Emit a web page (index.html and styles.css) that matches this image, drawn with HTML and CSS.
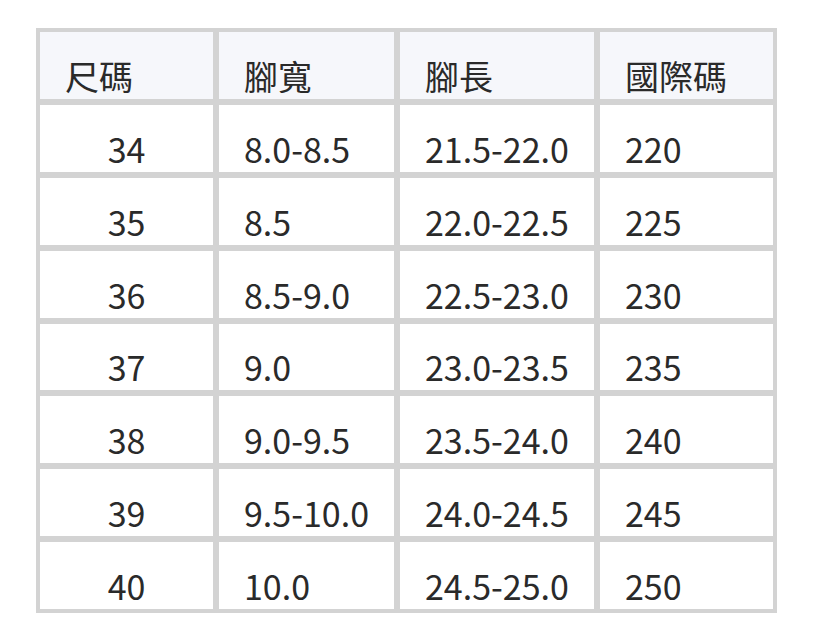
FILE: index.html
```html
<!DOCTYPE html>
<html lang="zh-Hant">
<head>
<meta charset="utf-8">
<title>尺碼表</title>
<link rel="stylesheet" href="styles.css">
</head>
<body>
<table class="size-table">
  <colgroup>
    <col class="c1"><col class="c2"><col class="c3"><col class="c4">
  </colgroup>
  <thead>
    <tr><th>尺碼</th><th>腳寬</th><th>腳長</th><th>國際碼</th></tr>
  </thead>
  <tbody>
    <tr><td class="size">34</td><td>8.0-8.5</td><td>21.5-22.0</td><td>220</td></tr>
    <tr><td class="size">35</td><td>8.5</td><td>22.0-22.5</td><td>225</td></tr>
    <tr><td class="size">36</td><td>8.5-9.0</td><td>22.5-23.0</td><td>230</td></tr>
    <tr><td class="size">37</td><td>9.0</td><td>23.0-23.5</td><td>235</td></tr>
    <tr><td class="size">38</td><td>9.0-9.5</td><td>23.5-24.0</td><td>240</td></tr>
    <tr><td class="size">39</td><td>9.5-10.0</td><td>24.0-24.5</td><td>245</td></tr>
    <tr><td class="size">40</td><td>10.0</td><td>24.5-25.0</td><td>250</td></tr>
  </tbody>
</table>
</body>
</html>
```
FILE: styles.css
```css
html, body {
  margin: 0;
  padding: 0;
  background: #ffffff;
}

body {
  padding: 28px 0 0 36px;
  font-family: "Noto Sans CJK TC", "Noto Sans CJK SC", "Noto Sans", sans-serif;
  color: #2a2a2a;
}

.size-table {
  table-layout: fixed;
  width: 741px;
  border-collapse: separate;
  border-spacing: 0;
  border: 1px solid #d3d3d3;
}

.c1 { width: 179px; }
.c2 { width: 181px; }
.c3 { width: 200px; }
.c4 { width: 179px; }

.size-table th,
.size-table td {
  border: 3px solid #d3d3d3;
  font-size: 34px;
  font-weight: 400;
  line-height: 46px;
  text-align: left;
  vertical-align: bottom;
  padding: 0 0 0 25px;
  white-space: nowrap;
}

.size-table th {
  background: #f6f7fb;
  padding-top: 21px;
}

.size-table td {
  padding-top: 20.86px;
}

.size-table td.size {
  text-align: center;
  padding-left: 0;
}
```
